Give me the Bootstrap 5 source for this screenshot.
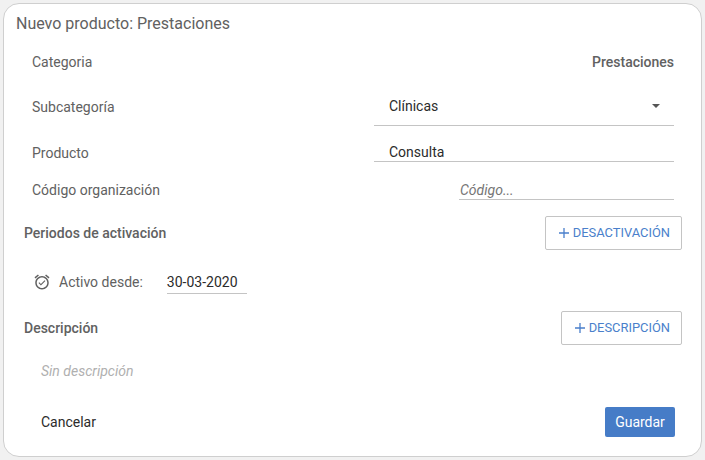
<!DOCTYPE html>
<html lang="es">
<head>
<meta charset="utf-8">
<title>Nuevo producto</title>
<link href="https://cdn.jsdelivr.net/npm/bootstrap@5.3.0/dist/css/bootstrap.min.css" rel="stylesheet">
<style>
html,body{height:100%;}
body{background:#f1f1f1;font-family:Roboto,"Liberation Sans",sans-serif;font-size:14px;color:#212121;padding:3px;overflow:hidden;}
.sheet{height:454px;background:#fff;border:1px solid #cfcfcf;border-radius:16px;padding:0 19px 0 12px;}
.sheet-title{height:41px;font-size:16px;color:#616161;padding-top:9px;line-height:22px;}
.rowline{padding-left:16px;padding-right:8px;}
.lbl{color:#616161;line-height:20px;}
.r-cat{height:36px;padding-top:7px;}
.r-sub{height:45px;}
.r-pro{height:37px;}
.r-cod{height:37px;}
.lbl-sub{padding-top:16px;}
.lbl-pro{padding-top:17px;}
.lbl-cod{padding-top:17px;}
.val-strong{color:#616161;font-weight:500;line-height:20px;}
.sel-field{width:300px;height:45px;border-bottom:1px solid #c4c4c4;padding:15px 14px 0 15px;color:#2b2b2b;line-height:20px;}
.sel-caret{width:0;height:0;border-left:4px solid transparent;border-right:4px solid transparent;border-top:4px solid #555;margin-top:8px;}
.txt-field{width:300px;height:36px;border-bottom:1px solid #c4c4c4;padding:16px 15px 0;color:#2b2b2b;line-height:20px;}
.code-field{width:215px;height:37px;border-bottom:1px solid #c4c4c4;padding:17px 1px 0;color:#757575;font-style:italic;line-height:20px;}
.sect{padding-left:8px;}
.sect-title{font-weight:500;color:#616161;line-height:20px;}
.add-btn{height:34px;border:1px solid #c4c4c4;border-radius:2px;background:#fff;color:#4a7fcb;font-size:12.9px;padding:0 11px 0 12px;display:flex;align-items:center;gap:2.5px;}
.r-per{margin-top:16px;}
.r-act{height:61px;padding-left:17px;padding-top:2px;}
.act-date{width:80px;height:24px;border-bottom:1px solid #c4c4c4;margin-left:24px;padding-top:2px;color:#2b2b2b;line-height:20px;}
.muted-desc{color:#b0b0b0;font-style:italic;padding-left:25px;line-height:20px;margin-top:16px;}
.foot{margin-top:26px;padding-left:25px;padding-right:7px;}
.save-btn{width:70px;height:30px;background:#467cc7;color:#fff;border:0;border-radius:2px;font-size:14px;padding:0;}
.cancel-btn{color:#2b2b2b;font-size:14px;padding:0;border:0;background:none;}
</style>
</head>
<body>
<div class="sheet">
  <div class="sheet-title">Nuevo producto: Prestaciones</div>
  <div class="rowline r-cat d-flex justify-content-between">
    <span class="lbl">Categoria</span><span class="val-strong">Prestaciones</span>
  </div>
  <div class="rowline r-sub d-flex justify-content-between">
    <span class="lbl lbl-sub">Subcategoría</span>
    <div class="sel-field d-flex justify-content-between align-items-start"><span>Clínicas</span><span class="sel-caret"></span></div>
  </div>
  <div class="rowline r-pro d-flex justify-content-between">
    <span class="lbl lbl-pro">Producto</span>
    <div class="txt-field">Consulta</div>
  </div>
  <div class="rowline r-cod d-flex justify-content-between">
    <span class="lbl lbl-cod">Código organización</span>
    <div class="code-field">Código...</div>
  </div>
  <div class="sect r-per d-flex justify-content-between align-items-center">
    <span class="sect-title">Periodos de activación</span>
    <button class="add-btn" type="button"><svg width="12" height="12" viewBox="0 0 12 12"><path d="M6 1v10M1 6h10" stroke="#4a7fcb" stroke-width="1.3" fill="none"/></svg>DESACTIVACIÓN</button>
  </div>
  <div class="r-act d-flex align-items-center">
    <svg width="18" height="18" viewBox="0 0 24 24" fill="#616161"><path d="M22 5.72l-4.6-3.86-1.29 1.53 4.6 3.86L22 5.72zM7.88 3.39L6.6 1.86 2 5.71l1.29 1.53 4.59-3.85zM12 4c-4.97 0-9 4.03-9 9s4.03 9 9 9 9-4.03 9-9-4.03-9-9-9zm0 16c-3.87 0-7-3.13-7-7s3.13-7 7-7 7 3.13 7 7-3.13 7-7 7zm-1.46-5.47L8.41 12.4l-1.06 1.06 3.18 3.18 6-6-1.06-1.06-4.93 4.95z"/></svg>
    <span class="lbl ms-2">Activo desde:</span>
    <div class="act-date">30-03-2020</div>
  </div>
  <div class="sect d-flex justify-content-between align-items-center">
    <span class="sect-title">Descripción</span>
    <button class="add-btn" type="button"><svg width="12" height="12" viewBox="0 0 12 12"><path d="M6 1v10M1 6h10" stroke="#4a7fcb" stroke-width="1.3" fill="none"/></svg>DESCRIPCIÓN</button>
  </div>
  <div class="muted-desc">Sin descripción</div>
  <div class="foot d-flex justify-content-between align-items-center">
    <button class="cancel-btn" type="button">Cancelar</button>
    <button class="save-btn" type="button">Guardar</button>
  </div>
</div>
<script src="https://cdn.jsdelivr.net/npm/bootstrap@5.3.0/dist/js/bootstrap.bundle.min.js"></script>
</body>
</html>
